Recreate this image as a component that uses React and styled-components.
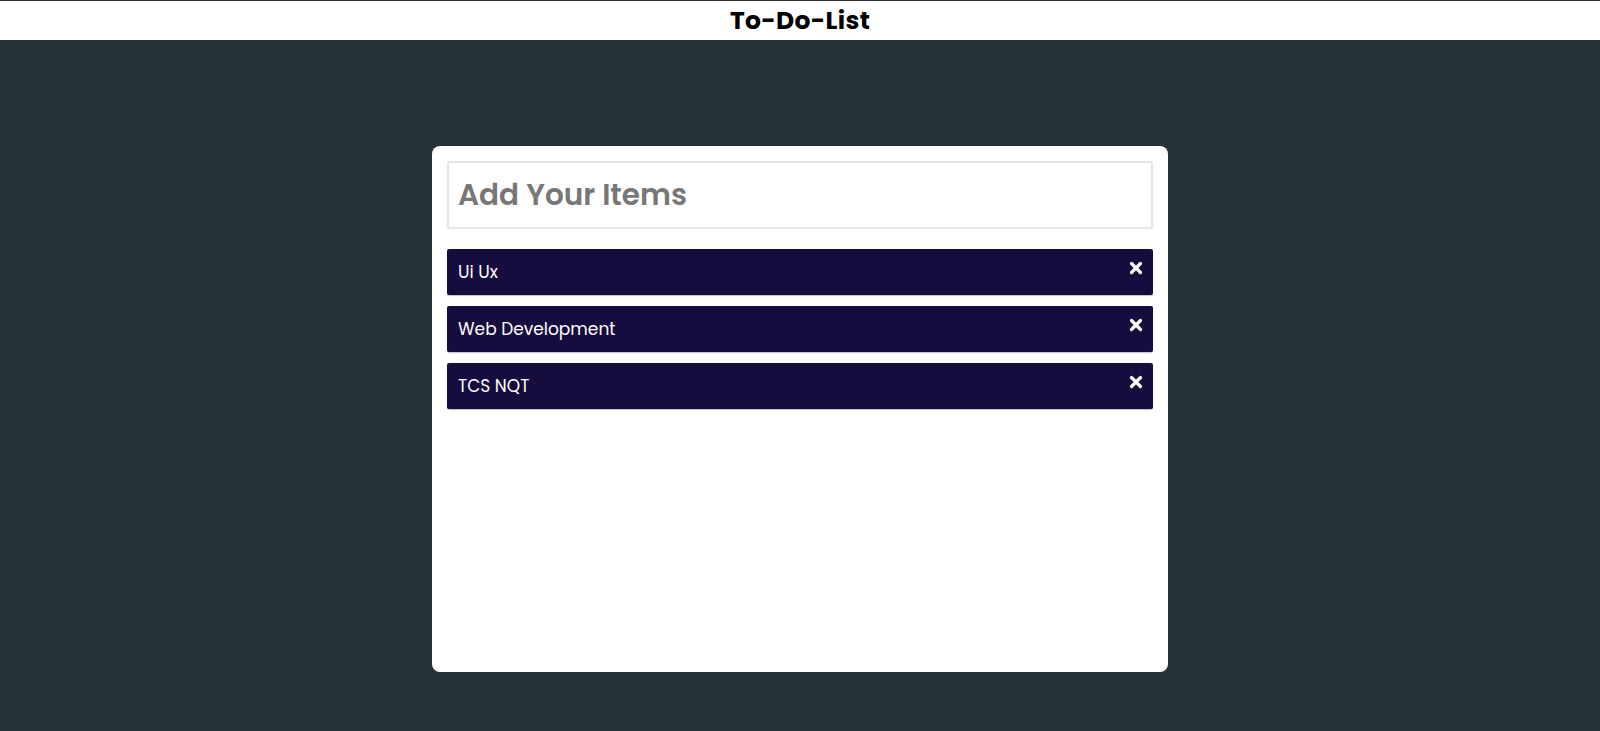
import React, { useState } from "react";
import styled, { createGlobalStyle } from "styled-components";

const GlobalStyle = createGlobalStyle`
  html, body {
    margin: 0;
    padding: 0;
    background: #263238;
    font-family: Poppins, Inter, "Noto Sans", sans-serif;
  }
`;

const Page = styled.div`
  min-height: 731px;
  display: flex;
  flex-direction: column;
  background: #263238;
`;

const Header = styled.header`
  border-top: 1px solid #263238;
  height: 39px;
  background: #fff;
  display: flex;
  align-items: center;
  justify-content: center;
`;

const Title = styled.h1`
  margin: 0;
  font-size: 25px;
  font-weight: 700;
  letter-spacing: 0.3px;
  color: #000;
`;

const Card = styled.div`
  width: 736px;
  height: 526px;
  box-sizing: border-box;
  margin: 106px auto 0;
  background: #fff;
  border-radius: 8px;
  padding: 15px;
  display: flex;
  flex-direction: column;
  gap: 20px;
`;

const Input = styled.input`
  height: 68px;
  box-sizing: border-box;
  border: 2px solid #e6e6e6;
  border-radius: 2px;
  padding: 0 9px;
  font-family: inherit;
  font-size: 29.5px;
  font-weight: 600;
  color: #333;
  outline: none;

  &::placeholder {
    color: #777;
  }
`;

const List = styled.ul`
  list-style: none;
  margin: 0;
  padding: 0;
  display: flex;
  flex-direction: column;
  gap: 11px;
`;

const Item = styled.li`
  position: relative;
  height: 46px;
  display: flex;
  align-items: center;
  padding: 0 11px;
  background: #170c3e;
  color: #fff;
  font-size: 17px;
  border-radius: 2px;
  box-shadow: 0 1px 1px rgba(0, 0, 0, 0.25);
`;

const Remove = styled.button`
  position: absolute;
  top: 12px;
  right: 10px;
  width: 14px;
  height: 14px;
  padding: 0;
  border: none;
  background: none;
  cursor: pointer;
  display: flex;
`;

const CloseIcon = () => (
  <svg width="14" height="14" viewBox="0 0 14 14">
    <path d="M2.5 2.5 L11.5 11.5 M11.5 2.5 L2.5 11.5" stroke="#fff" strokeWidth="3.2" strokeLinecap="round" />
  </svg>
);

const App = () => {
  const [text, setText] = useState("");
  const [items, setItems] = useState(["Ui Ux", "Web Development", "TCS NQT"]);

  const add = (e) => {
    if (e.key === "Enter" && text.trim()) {
      setItems([...items, text.trim()]);
      setText("");
    }
  };

  return (
    <Page>
      <GlobalStyle />
      <Header>
        <Title>To-Do-List</Title>
      </Header>
      <Card>
        <Input
          placeholder="Add Your Items"
          value={text}
          onChange={(e) => setText(e.target.value)}
          onKeyDown={add}
        />
        <List>
          {items.map((item, i) => (
            <Item key={i}>
              {item}
              <Remove onClick={() => setItems(items.filter((_, j) => j !== i))}>
                <CloseIcon />
              </Remove>
            </Item>
          ))}
        </List>
      </Card>
    </Page>
  );
};

export default App;
